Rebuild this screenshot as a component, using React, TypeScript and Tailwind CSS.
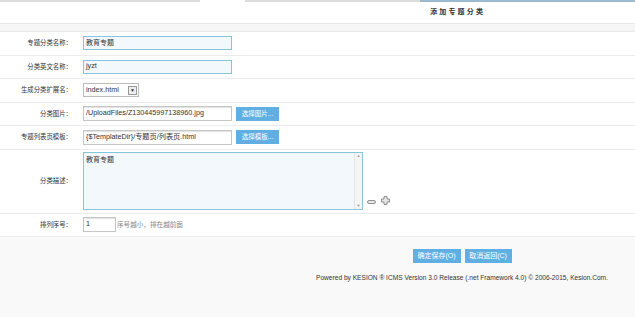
import React from "react";

const cjk = { fontFamily: '"Liberation Sans", "Noto Sans CJK SC", sans-serif' };

const Row = ({ label, h = "h-[23.5px]", children }: { label: string; h?: string; children: React.ReactNode }) => (
    <div className={`flex items-center border-b border-[#ececec] ${h}`}>
        <div className="w-[72px] text-right text-[6.4px] text-[#333]">{label}</div>
        <div className="flex items-center pl-[11px]">{children}</div>
    </div>
);

const Btn = ({ text, w = "w-[43px]", size = "text-[6.5px]" }: { text: string; w?: string; size?: string }) => (
    <div className={`flex h-[14px] items-center justify-center bg-[#5fafe3] text-white ${size} ${w}`}>{text}</div>
);

const App = () => {
    return (
        <div className="h-[317px] w-[635px] overflow-hidden bg-[#f9f9f9]" style={cjk}>
            {/* tabs line */}
            <div className="flex h-[2px]">
                <div className="w-[200px] bg-[#dcdcdc]" />
                <div className="w-[45px] bg-white" />
                <div className="w-[175px] bg-[#dcdcdc]" />
                <div className="flex-1 bg-[#9bbad0]" />
            </div>
            <div className="flex h-[21px] items-center bg-white pl-[430px]">
                <span className="text-[7px] font-bold tracking-[2.2px] text-[#333]">添加专题分类</span>
            </div>
            <div className="h-[9px] border-y border-[#e8e8e8] bg-[#f6f6f6]" />

            {/* form */}
            <div className="bg-white">
                <Row label="专题分类名称：">
                    <div className="flex h-[14px] w-[149px] items-center border border-[#86c6da] bg-[#f2f8fc] pl-[2px] text-[7px] text-[#333]">
                        教育专题
                    </div>
                </Row>
                <Row label="分类英文名称：">
                    <div className="flex h-[14px] w-[149px] items-center border border-[#86c6da] bg-[#f2f8fc] pl-[2px] text-[7.2px] text-[#333]">
                        jyzt
                    </div>
                </Row>
                <Row label="生成分类扩展名：">
                    <div className="flex h-[14px] w-[56px] items-center justify-between border border-[#bdbdbd] bg-white pl-[2px] pr-[1px] text-[7.2px] text-[#333]">
                        index.html
                        <div className="flex h-[9px] w-[9px] items-center justify-center border border-[#999] bg-[#eee] text-[5px] leading-none">▼</div>
                    </div>
                </Row>
                <Row label="分类图片：">
                    <div className="flex h-[15px] w-[149px] items-center border border-[#c6c6c6] bg-white pl-[2px] text-[7.2px] text-[#333] shadow-[inset_0_1px_1px_#e2e2e2]">
                        /UploadFiles/Z130445997138960.jpg
                    </div>
                    <div className="ml-[4px]">
                        <Btn text="选择图片..." />
                    </div>
                </Row>
                <Row label="专题列表页模板：">
                    <div className="flex h-[15px] w-[149px] items-center border border-[#c6c6c6] bg-white pl-[2px] text-[7.2px] text-[#333] shadow-[inset_0_1px_1px_#e2e2e2]">
                        {"{$TemplateDir}/专题页/列表页.html"}
                    </div>
                    <div className="ml-[4px]">
                        <Btn text="选择模板..." />
                    </div>
                </Row>
                <Row label="分类描述：" h="h-[64px]">
                    <div className="flex h-[58px] w-[280px] border border-[#86c6da] bg-[#f2f8fc]">
                        <div className="flex-1 pl-[2px] pt-[2px] text-[7px] text-[#333]">教育专题</div>
                        <div className="flex w-[8px] flex-col items-center justify-between border-l border-[#e4e4e4] bg-[#f4f4f4] py-[1px] text-[4px] leading-none text-[#999]">
                            <span>▲</span>
                            <span>▼</span>
                        </div>
                    </div>
                    <div className="flex items-end self-end pb-[5px] pl-[4px]">
                        <svg width="9" height="6" viewBox="0 0 9 6">
                            <rect x="0.5" y="1.5" width="8" height="3" rx="1.5" fill="#e6e6e6" stroke="#777" strokeWidth="0.8" />
                        </svg>
                        <svg width="9" height="9" viewBox="0 0 9 9" className="ml-[5px]">
                            <path d="M3 0.5h3v2.5h2.5v3H6v2.5H3V6H0.5V3H3z" fill="#e6e6e6" stroke="#777" strokeWidth="0.8" strokeLinejoin="round" />
                        </svg>
                    </div>
                </Row>
                <Row label="排列序号：">
                    <div className="flex h-[15px] w-[33px] items-center border border-[#c6c6c6] bg-white pl-[2px] text-[7.2px] text-[#333] shadow-[inset_0_1px_1px_#e2e2e2]">
                        1
                    </div>
                    <span className="ml-[1px] text-[6.6px] text-[#888]">序号越小，排在越前面</span>
                </Row>
            </div>

            {/* actions */}
            <div className="pl-[289px] pt-[12px]">
                <div className="flex justify-center gap-[4px]">
                    <Btn text="确定保存(O)" w="w-[48px]" size="text-[7px]" />
                    <Btn text="取消返回(C)" w="w-[47px]" size="text-[7px]" />
                </div>
                <p className="mt-[10px] text-center text-[6.6px] text-[#333]">
                    Powered by KESION ® ICMS Version 3.0 Release (.net Framework 4.0) © 2006-2015, Kesion.Com.
                </p>
            </div>
        </div>
    );
};

export default App;
